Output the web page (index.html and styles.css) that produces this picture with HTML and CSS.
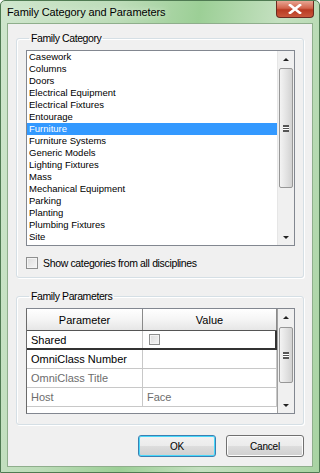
FILE: index.html
```html
<!DOCTYPE html>
<html lang="en">
<head>
    <meta charset="UTF-8">
    <title>Family Category and Parameters</title>
    <link rel="stylesheet" href="styles.css">
</head>
<body>
    <div class="window">
        <div class="titlebar">
            <span class="title">Family Category and Parameters</span>
            <span class="close">
                <svg width="14" height="10" viewBox="0 0 14 10">
                    <path d="M2 1 L12 9 M12 1 L2 9" stroke="#fff" stroke-width="2.6" stroke-linecap="square"/>
                </svg>
            </span>
        </div>

        <div class="client">
            <fieldset class="group group-category">
                <legend>Family Category</legend>
                <div class="listbox">
                    <ul class="items">
                        <li>Casework</li>
                        <li>Columns</li>
                        <li>Doors</li>
                        <li>Electrical Equipment</li>
                        <li>Electrical Fixtures</li>
                        <li>Entourage</li>
                        <li class="selected">Furniture</li>
                        <li>Furniture Systems</li>
                        <li>Generic Models</li>
                        <li>Lighting Fixtures</li>
                        <li>Mass</li>
                        <li>Mechanical Equipment</li>
                        <li>Parking</li>
                        <li>Planting</li>
                        <li>Plumbing Fixtures</li>
                        <li>Site</li>
                    </ul>
                    <div class="scrollbar">
                        <span class="arrow up"></span>
                        <div class="track">
                            <div class="thumb thumb-list"><span class="grip"></span></div>
                        </div>
                        <span class="arrow down"></span>
                    </div>
                </div>
                <label class="check-row">
                    <span class="checkbox"></span>
                    Show categories from all disciplines
                </label>
            </fieldset>

            <fieldset class="group group-params">
                <legend>Family Parameters</legend>
                <div class="grid">
                    <div class="table">
                        <div class="row head">
                            <div class="cell">Parameter</div>
                            <div class="cell">Value</div>
                        </div>
                        <div class="row active">
                            <div class="cell">Shared</div>
                            <div class="cell"><span class="checkbox small"></span></div>
                        </div>
                        <div class="row">
                            <div class="cell">OmniClass Number</div>
                            <div class="cell"></div>
                        </div>
                        <div class="row muted">
                            <div class="cell">OmniClass Title</div>
                            <div class="cell"></div>
                        </div>
                        <div class="row muted">
                            <div class="cell">Host</div>
                            <div class="cell">Face</div>
                        </div>
                    </div>
                    <div class="scrollbar">
                        <span class="arrow up"></span>
                        <div class="track">
                            <div class="thumb thumb-grid"><span class="grip"></span></div>
                        </div>
                        <span class="arrow down"></span>
                    </div>
                </div>
            </fieldset>

            <div class="buttons">
                <button type="button" class="btn default">OK</button>
                <button type="button" class="btn">Cancel</button>
            </div>
        </div>
    </div>
</body>
</html>
```

FILE: styles.css
```css
body {
    margin: 0;
    padding: 0;
    font-family: "Liberation Sans", Arial, sans-serif;
    background: #fff;
}

.window {
    width: 320px;
    height: 473px;
    box-sizing: border-box;
    border: 1px solid #4f7a52;
    border-radius: 5px 5px 0 0;
    padding: 0 6px 5px 6px;
    background: linear-gradient(100deg, #cfe6cd 0%, #bcdcb8 30%, #9ccf96 50%, #c4e0c0 70%, #a8d3a2 100%);
    display: flex;
    flex-direction: column;
}

.titlebar {
    height: 22px;
    display: flex;
    align-items: flex-start;
    justify-content: space-between;
}

.title {
    font-size: 11px;
    letter-spacing: -0.1px;
    color: #000;
    margin-top: 5px;
    text-shadow: 0 0 6px #e4f2e2;
}

.close {
    width: 38px;
    height: 17px;
    margin-right: -1px;
    box-sizing: border-box;
    border: 1px solid #6b2a20;
    border-top: none;
    border-radius: 0 0 4px 4px;
    background: linear-gradient(#e8a593 0%, #d2644c 45%, #b83a22 55%, #c9583c 100%);
    display: flex;
    align-items: center;
    justify-content: center;
}

.client {
    flex: 1;
    background: #f0f0f0;
    border: 1px solid #8fae8c;
    display: flex;
    flex-direction: column;
    padding: 0 8px;
}

/* group boxes */
.group {
    margin: 0;
    border: 1px solid #d5dfe5;
    border-radius: 3px;
    box-shadow: inset 1px 1px 0 #fff, 1px 1px 0 #fff;
    padding: 0 8px 0 9px;
    box-sizing: border-box;
}

.group legend {
    font-size: 10.5px;
    letter-spacing: -0.4px;
    line-height: 13px;
    height: 13px;
    color: #000;
    padding: 0 2px;
    margin-left: 3px;
}

.group-category {
    margin-top: 8px;
    height: 246px;
}

.group-params {
    margin-top: 12px;
    height: 135px;
}

/* list box */
.listbox {
    margin-top: 5px;
    height: 196px;
    box-sizing: border-box;
    border: 1px solid #828790;
    background: #fff;
    display: flex;
}

.items {
    list-style: none;
    margin: 0;
    padding: 0;
    flex: 1;
}

.items li {
    font-size: 9.5px;
    line-height: 12px;
    height: 12px;
    padding-left: 2px;
    color: #000;
}

.items li.selected {
    background: #3399ff;
    color: #fff;
}

/* scroll bars */
.scrollbar {
    width: 16px;
    display: flex;
    flex-direction: column;
    background: #f0f0f0;
    border-left: 1px solid #e6e6e6;
}

.arrow {
    height: 16px;
    display: flex;
    align-items: center;
    justify-content: center;
}

.arrow::before {
    content: "";
    width: 0;
    height: 0;
    border-left: 3px solid transparent;
    border-right: 3px solid transparent;
}

.arrow.up::before {
    border-bottom: 3px solid #222;
}

.arrow.down::before {
    border-top: 3px solid #222;
}

.track {
    flex: 1;
    display: flex;
    flex-direction: column;
}

.thumb {
    margin: 1px 1px 0 1px;
    border: 1px solid #979797;
    border-radius: 2px;
    background: linear-gradient(90deg, #f3f3f3 0%, #e3e3e3 50%, #d2d2d2 100%);
    display: flex;
    align-items: center;
    justify-content: center;
}

.thumb-list {
    height: 118px;
}

.thumb-grid {
    height: 54px;
    margin-top: 2px;
}

.grip {
    width: 6px;
    height: 5px;
    border-top: 1px solid #555;
    border-bottom: 1px solid #555;
    background: linear-gradient(#fff 0, #fff 1px, #555 1px, #555 2px, #fff 2px);
    background-size: 100% 2px;
    background-position: 0 1px;
}

/* checkbox */
.check-row {
    display: flex;
    align-items: center;
    gap: 5px;
    margin-top: 11px;
    font-size: 10.5px;
    letter-spacing: -0.35px;
    line-height: 12px;
    color: #000;
}

.checkbox {
    width: 10px;
    height: 10px;
    border: 1px solid #8e8f8f;
    background: linear-gradient(135deg, #dcdcdc, #f6f6f6);
    box-shadow: inset 0 0 0 1px #f4f4f4;
}

.checkbox.small {
    width: 9px;
    height: 9px;
    margin-left: 2px;
}

/* parameters grid */
.grid {
    margin-top: 5px;
    height: 106px;
    display: flex;
    background: #fff;
    border: 1px solid #828790;
    border-left: 1px solid #6a6a6a;
    box-sizing: border-box;
}

.table {
    flex: 1;
}

.row {
    display: grid;
    grid-template-columns: 116px 1fr;
    height: 18px;
    border-bottom: 1px solid #c8c8c8;
    font-size: 11px;
    color: #000;
}

.row .cell {
    display: flex;
    align-items: center;
    padding-left: 4px;
    border-right: 1px solid #c8c8c8;
}

.row.head {
    height: 21px;
    background: linear-gradient(#ffffff 0%, #f5f5f5 50%, #e6e6e6 100%);
    border-bottom: 1px solid #555;
}

.row.head .cell {
    justify-content: center;
    padding-left: 0;
    border-right: 1px solid #8a8a8a;
}

.row.active {
    border-bottom: 2px solid #333;
    height: 17px;
}

.row.active .cell:last-child {
    border-right: 2px solid #333;
}

.row.muted {
    color: #6d6d6d;
}

.grid .scrollbar {
    border-left: 1px solid #a0a0a0;
}

/* buttons */
.buttons {
    display: flex;
    justify-content: flex-end;
    gap: 10px;
    margin-top: 10px;
}

.btn {
    width: 78px;
    height: 22px;
    font-family: "Liberation Sans", Arial, sans-serif;
    font-size: 10px;
    letter-spacing: -0.2px;
    color: #000;
    border: 1px solid #707070;
    border-radius: 3px;
    background: linear-gradient(#f2f2f2 0%, #ebebeb 50%, #dddddd 51%, #cfcfcf 100%);
    box-shadow: inset 0 0 0 1px #fcfcfc;
    padding: 0;
}

.btn.default {
    border-color: #3c7fb1;
    box-shadow: inset 0 0 0 1px #48d8fb;
}
```
